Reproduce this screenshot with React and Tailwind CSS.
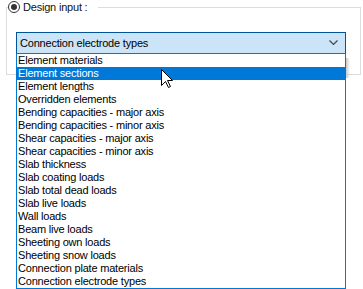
const ITEMS = [
  "Element materials",
  "Element sections",
  "Element lengths",
  "Overridden elements",
  "Bending capacities - major axis",
  "Bending capacities - minor axis",
  "Shear capacities - major axis",
  "Shear capacities - minor axis",
  "Slab thickness",
  "Slab coating loads",
  "Slab total dead loads",
  "Slab live loads",
  "Wall loads",
  "Beam live loads",
  "Sheeting own loads",
  "Sheeting snow loads",
  "Connection plate materials",
  "Connection electrode types",
];

function Radio() {
  return (
    <span className="flex items-center justify-center w-[12px] h-[12px] rounded-full border border-[#333333] bg-white">
      <span className="w-[6px] h-[6px] rounded-full bg-[#333333]" />
    </span>
  );
}

function Cursor() {
  return (
    <svg width="13" height="20" viewBox="0 0 13 20" className="absolute left-[161px] top-[69px]">
      <path
        d="M0.5 0.5 L0.5 16.5 L4.5 12.5 L7.5 18.5 L9.5 17.5 L6.5 11.5 L11.5 11.5 Z"
        fill="#ffffff"
        stroke="#000000"
        strokeWidth="1"
      />
    </svg>
  );
}

export default function App() {
  const selected = 1;

  return (
    <div className="relative w-[363px] h-[289px] overflow-hidden bg-white text-black font-['Liberation_Sans',Arial,sans-serif] text-[11px] tracking-[-0.2px] leading-[13px]">
      <fieldset className="ml-[6px] w-[355px] h-[75px] border border-[#dcdcdc]">
        <legend className="ml-[1px] pr-[11px] flex items-center gap-[3px] h-[14px] bg-white">
          <Radio />
          <span className="text-[#111111]">Design input :</span>
        </legend>

        <div className="mt-[18px] ml-[9px] w-[330px] h-[22px] border border-[#005499] bg-[#cce4f7] flex items-center justify-between pl-[3px] pr-[7px]">
          <span>Connection electrode types</span>
          <svg width="9" height="6" viewBox="0 0 9 6">
            <path d="M0.5 0.5 L4.5 4.5 L8.5 0.5" fill="none" stroke="#444444" strokeWidth="1.2" />
          </svg>
        </div>
      </fieldset>

      {/* faint drop shadow of the open list */}
      <div className="absolute left-[346px] top-[58px] w-[4px] h-[20px] bg-gradient-to-r from-[#c8c8c8] to-transparent" />

      <ul className="absolute left-[16px] top-[53px] w-[330px] border border-[#0078d7] bg-white">
        {ITEMS.map((item, i) => (
          <li
            key={item}
            className={
              i === selected
                ? "h-[13px] pl-[1px] whitespace-nowrap bg-[#0078d7] text-white"
                : "h-[13px] pl-[1px] whitespace-nowrap"
            }
          >
            {item}
          </li>
        ))}
      </ul>

      <Cursor />
    </div>
  );
}
